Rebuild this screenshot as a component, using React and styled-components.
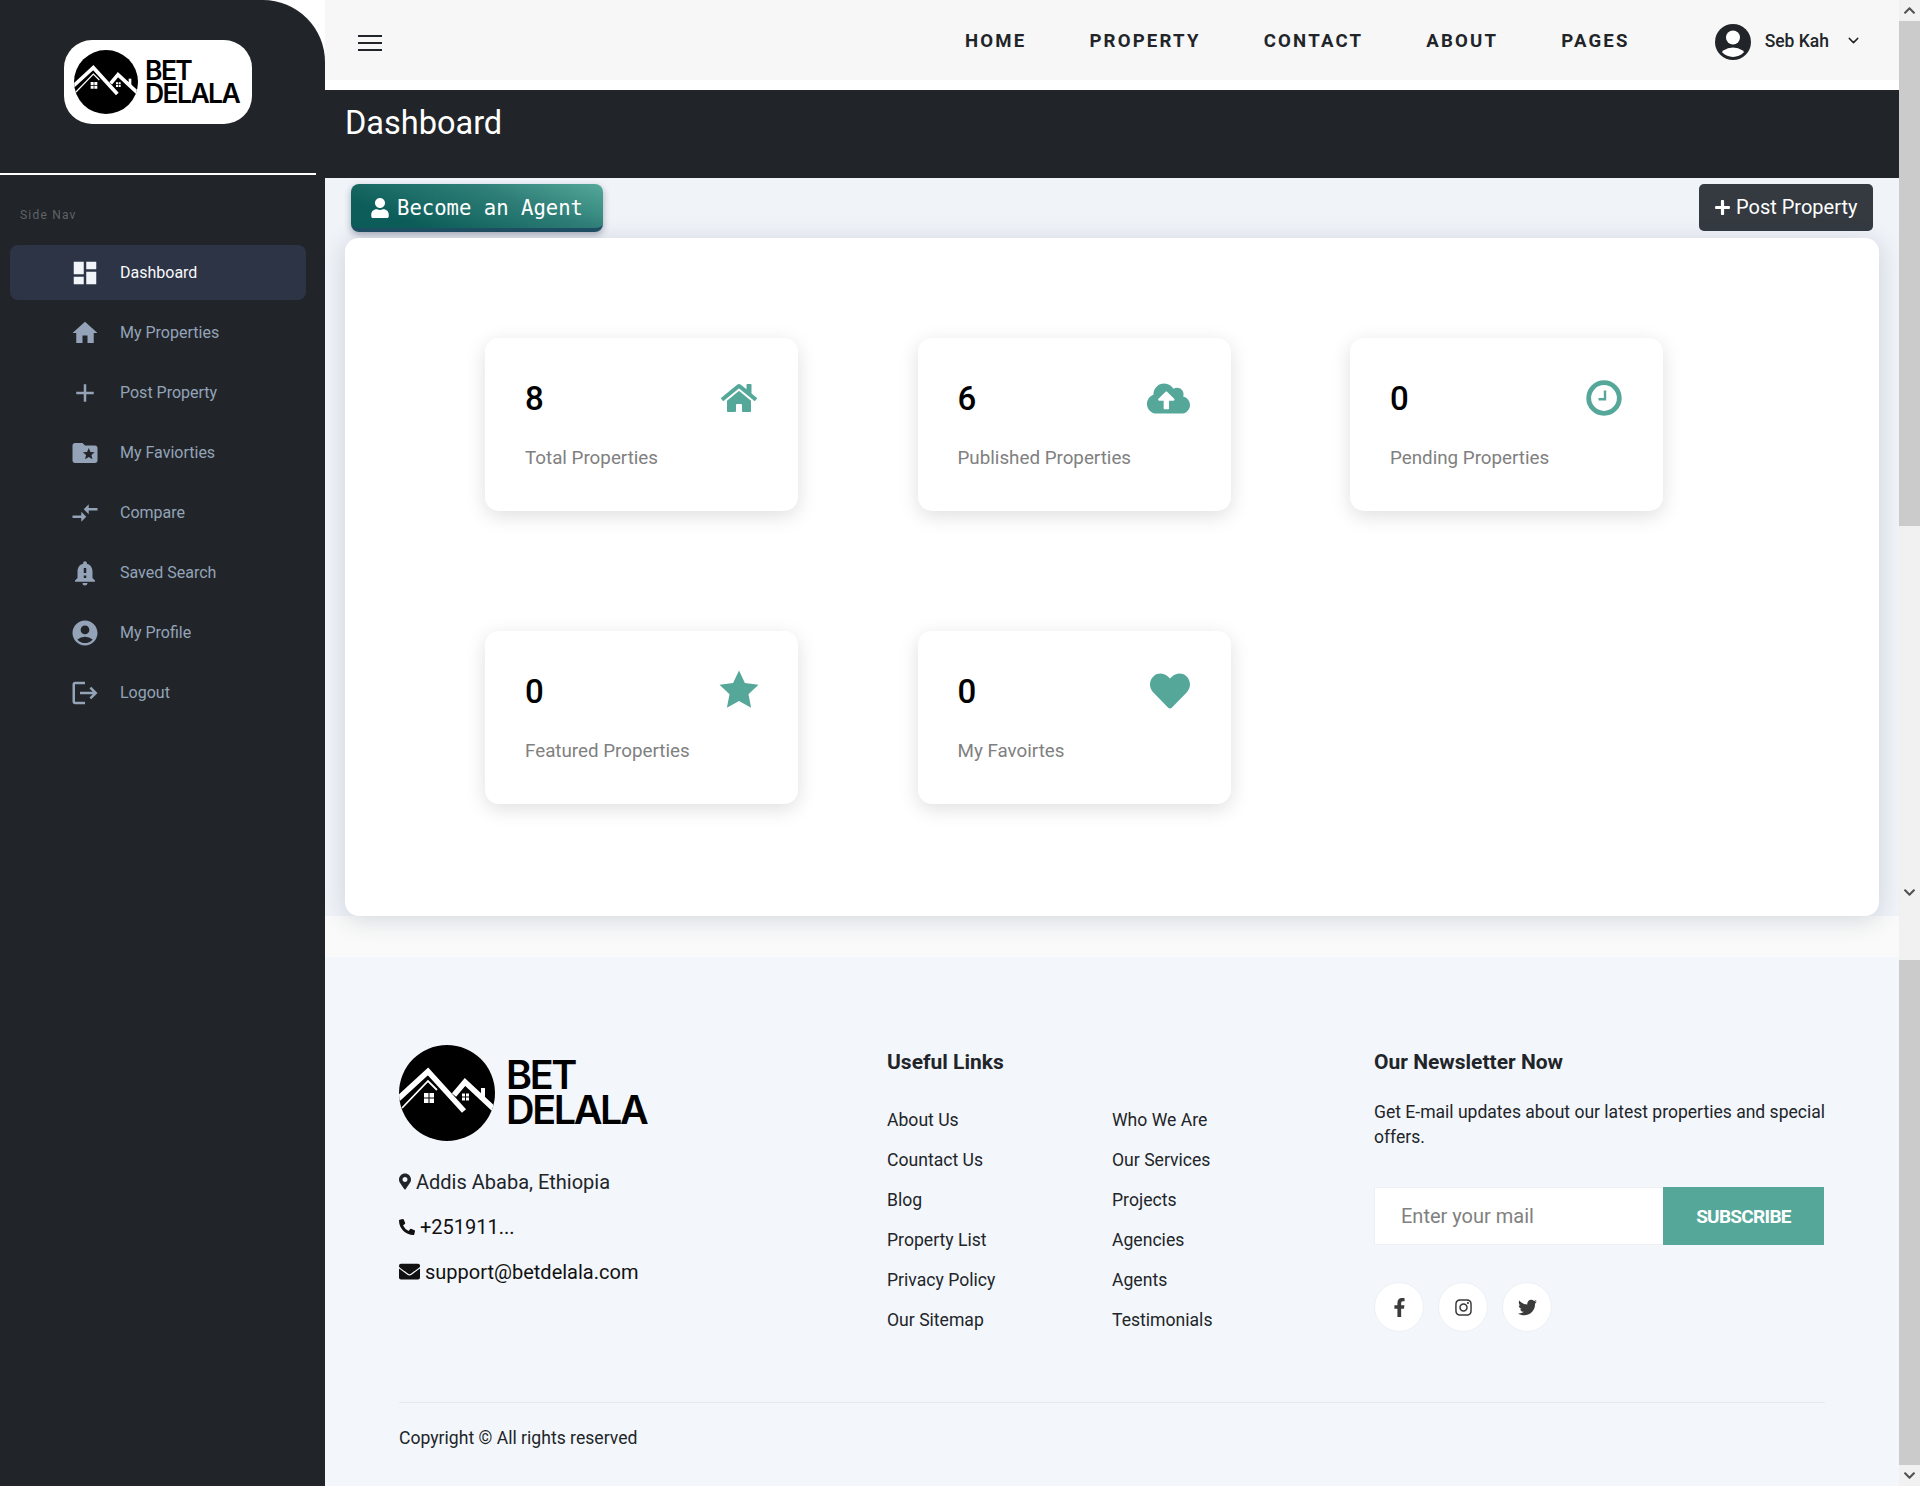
import React from "react";
import styled, { createGlobalStyle } from "styled-components";
import {
  MdDashboard, MdHome, MdAdd, MdFolderSpecial, MdCompareArrows,
  MdNotificationImportant, MdAccountCircle, MdLogout,
} from "react-icons/md";
import {
  FaUser, FaPlus, FaHome, FaCloudUploadAlt, FaHeart, FaMapMarkerAlt, FaPhoneAlt,
  FaEnvelope, FaFacebookF, FaInstagram, FaTwitter, FaChevronUp, FaChevronDown,
} from "react-icons/fa";
import { ChevronDown } from "lucide-react";

const Global = createGlobalStyle`
  html, body { margin: 0; padding: 0; background: #fff; overflow: hidden; }
  body { font-family: Roboto, "Liberation Sans", sans-serif; color: #212529; }
  * { box-sizing: border-box; }
`;

const Page = styled.div`
  display: grid;
  grid-template-columns: 325px 1574px 21px;
  width: 1920px;
  height: 1486px;
  overflow: hidden;
`;

/* ---------- sidebar ---------- */
const Sidebar = styled.aside`
  background: #212529;
  border-top-right-radius: 62px;
  height: 1486px;
`;
const SideHead = styled.div`
  height: 175px;
  width: 316px;
  padding: 40px 0 0 64px;
  border-bottom: 2px solid #fff;
`;
const LogoPill = styled.div`
  display: inline-flex;
  align-items: center;
  width: 188px;
  height: 84px;
  padding-left: 10px;
  background: #fff;
  border-radius: 28px;
`;
const LogoWrap = styled.div`
  display: flex;
  align-items: center;
  gap: ${(p) => p.$gap}px;
`;
const LogoText = styled.div`
  font-family: Inter, "Liberation Sans", sans-serif;
  font-weight: 600;
  color: #000;
  font-size: ${(p) => p.$size}px;
  line-height: ${(p) => p.$line}px;
  letter-spacing: -0.06em;
`;
const SideLabel = styled.div`
  padding: 32px 0 0 20px;
  height: 70px;
  font-size: 12px;
  line-height: 16px;
  letter-spacing: 1.2px;
  color: #5f6368;
`;
const Menu = styled.nav`
  display: flex;
  flex-direction: column;
  gap: 5px;
  padding-left: 10px;
`;
const MenuItem = styled.a`
  display: flex;
  align-items: center;
  width: 296px;
  height: 55px;
  padding-left: 60px;
  gap: 20px;
  border-radius: 8px;
  font-size: 16px;
  color: ${(p) => (p.$active ? "#f8fafc" : "#94a3b8")};
  background: ${(p) => (p.$active ? "#2d3446" : "transparent")};
  svg { width: 30px; height: 30px; flex: none; color: ${(p) => (p.$active ? "#f1f5f9" : "#94a3b8")}; }
`;

/* ---------- main ---------- */
const Main = styled.main`
  display: flex;
  flex-direction: column;
  height: 1486px;
`;
const Topbar = styled.header`
  display: flex;
  align-items: center;
  height: 80px;
  padding: 4px 37px 0 33px;
  background: #f7f7f7;
`;
const Burger = styled.div`
  display: flex;
  flex-direction: column;
  gap: 4.5px;
  width: 24px;
  margin-top: 2px;
  span { display: block; height: 2.5px; background: #212529; }
`;
const TopNav = styled.nav`
  display: flex;
  gap: 63px;
  margin-left: auto;
  margin-top: -2px;
`;
const TopLink = styled.a`
  font-size: 18.6px;
  font-weight: 700;
  letter-spacing: 2.2px;
  color: #212529;
`;
const UserBox = styled.div`
  display: flex;
  align-items: center;
  margin-left: 85px;
  font-size: 17.5px;
  font-weight: 500;
  color: #212529;
  span { margin: -3px 16px 0 14px; }
  svg:last-child { margin-top: -3px; }
`;
const TitleBand = styled.div`
  margin-top: 10px;
  height: 88px;
  padding: 14px 0 0 20px;
  background: #212529;
`;
const Title = styled.h1`
  margin: 0;
  font-size: 32.5px;
  font-weight: 400;
  line-height: 38px;
  color: #fff;
`;
const Content = styled.section`
  height: 738px;
  background: #f0f3f8;
  padding: 6px 20px 0;
`;
const ActionRow = styled.div`
  display: flex;
  justify-content: space-between;
  align-items: flex-start;
  height: 54px;
  padding: 0 6px;
`;
const AgentButton = styled.button`
  display: inline-flex;
  align-items: center;
  gap: 8px;
  width: 252px;
  height: 48px;
  padding: 4px 0 0 20px;
  border: 0;
  border-bottom: 4px solid #1f4f63;
  border-radius: 8px;
  background: linear-gradient(200deg, #55a899 0%, #2f7f78 35%, #0d5e5a 80%);
  box-shadow: 0 3px 7px rgba(30, 40, 70, 0.35);
  color: #fff;
  font-family: "DejaVu Sans Mono", monospace;
  font-size: 20.6px;
  svg { width: 18px; height: 20px; }
`;
const PostButton = styled.button`
  display: inline-flex;
  align-items: center;
  gap: 5px;
  height: 47px;
  width: 174px;
  padding: 0 0 1px 15px;
  border: 0;
  border-radius: 5px;
  background: #343a40;
  color: #fff;
  font-family: Roboto, sans-serif;
  font-size: 20px;
  svg { width: 17px; height: 17px; }
`;
const BoardCard = styled.div`
  position: relative;
  z-index: 1;
  height: 678px;
  padding: 100px 0 0 140px;
  background: #fff;
  border-radius: 14px;
  box-shadow: 0 4px 24px rgba(30, 50, 80, 0.17);
`;
const StatGrid = styled.div`
  display: grid;
  grid-template-columns: repeat(3, 313px);
  column-gap: 119.5px;
  row-gap: 120px;
`;
const StatCard = styled.div`
  height: 173px;
  padding: 41px 41px 0 40px;
  background: #fff;
  border-radius: 14px;
  box-shadow: 0 5px 20px rgba(0, 0, 0, 0.13);
`;
const StatTop = styled.div`
  display: flex;
  justify-content: space-between;
  align-items: center;
  height: 38px;
  color: #55a899;
`;
const StatValue = styled.div`
  font-size: 33px;
  font-weight: 500;
  color: #000;
`;
const StatLabel = styled.div`
  margin-top: 28px;
  font-size: 18.8px;
  line-height: 26px;
  color: #808080;
`;
const Strip = styled.div`
  height: 41px;
  background: #fafafa;
`;

/* ---------- footer ---------- */
const Footer = styled.footer`
  flex: 1;
  padding: 88px 74px 0;
  background: #f3f6fb;
`;
const FooterGrid = styled.div`
  display: grid;
  grid-template-columns: 451px 450px 450px;
  column-gap: 37px;
  height: 357px;
`;
const ContactList = styled.div`
  margin-top: 18px;
`;
const ContactRow = styled.div`
  display: flex;
  align-items: center;
  gap: 5px;
  height: 45px;
  font-size: 20px;
  color: ${(p) => p.$color || "#212529"};
`;
const PinIcon = styled(FaMapMarkerAlt)`
  width: 12px;
  height: 17px;
`;
const ColumnHead = styled.h4`
  margin: 5px 0 0;
  font-size: 21px;
  line-height: 24px;
  font-weight: 700;
  color: #212529;
`;
const LinkGrid = styled.div`
  display: grid;
  grid-template-columns: 225px 1fr;
  grid-auto-rows: 40px;
  margin-top: 26px;
`;
const FootLink = styled.a`
  display: flex;
  align-items: center;
  font-size: 17.6px;
  color: #212529;
`;
const NewsText = styled.p`
  margin: 26px -6px 0 0;
  font-size: 17.55px;
  line-height: 25px;
  color: #212529;
`;
const Subscribe = styled.form`
  display: flex;
  margin-top: 37px;
  width: 450px;
  height: 58px;
`;
const MailInput = styled.input`
  width: 289px;
  height: 58px;
  padding: 0 0 0 26px;
  border: 1px solid #edf0f3;
  border-right: 0;
  background: #fff;
  font-family: Roboto, sans-serif;
  font-size: 20px;
  &::placeholder { color: #808080; opacity: 1; }
`;
const SubscribeButton = styled.button`
  width: 161px;
  border: 0;
  background: #55a899;
  color: #fff;
  font-family: Roboto, sans-serif;
  font-size: 19px;
  font-weight: 700;
  letter-spacing: -0.7px;
`;
const Socials = styled.div`
  display: flex;
  gap: 14px;
  margin-top: 37px;
`;
const SocialCircle = styled.a`
  display: flex;
  align-items: center;
  justify-content: center;
  width: 50px;
  height: 50px;
  border: 1px solid #edf0f3;
  border-radius: 50%;
  background: #fff;
  color: #3b3b3b;
  svg { width: 19px; height: 19px; }
`;
const Rule = styled.hr`
  margin: 0;
  border: 0;
  border-top: 1px solid #e6e9ee;
`;
const Copyright = styled.div`
  padding-top: 23px;
  font-size: 17.6px;
  line-height: 24px;
  color: #212529;
`;

/* ---------- scrollbar ---------- */
const ScrollCol = styled.div`
  display: flex;
  flex-direction: column;
  height: 1486px;
  background: #f1f1f1;
`;
const ScrollArrow = styled.div`
  display: flex;
  align-items: center;
  justify-content: center;
  height: 21px;
  flex: none;
  color: #505050;
  margin-top: ${(p) => p.$top || 0}px;
  svg { width: 13px; height: 13px; }
`;
const ScrollThumb = styled.div`
  flex: none;
  height: 505px;
  margin-top: ${(p) => p.$top || 0}px;
  background: #cbcbcb;
`;
const Lifted = styled.div`
  display: flex;
  margin: 0 -2px ${(p) => p.$by}px 0;
`;

/* ---------- drawings ---------- */
function LogoMark({ size }) {
  return (
    <svg width={size} height={size} viewBox="0 0 96 96" style={{ flex: "none" }}>
      <defs>
        <clipPath id={`lm${size}`}>
          <circle cx="48" cy="48" r="48" />
        </clipPath>
      </defs>
      <circle cx="48" cy="48" r="48" fill="#000" />
      <g clipPath={`url(#lm${size})`} fill="none" stroke="#fff" strokeLinecap="butt">
        <path d="M-1 54 L29 26.5 L65 66" strokeWidth="5.5" />
        <path d="M3 63 L29 36 L38 45" strokeWidth="1.8" />
        <path d="M55 50 L66 37 L97 66" strokeWidth="5.5" />
        <rect x="82" y="43" width="4" height="12" fill="#fff" stroke="none" />
        <path d="M25 48h4.5v4.5H25zM30.5 48H35v4.5h-4.5zM25 53.5h4.5V58H25zM30.5 53.5H35V58h-4.5z" fill="#fff" stroke="none" />
        <path d="M63 48.5h3v3h-3zM67 48.5h3v3h-3zM63 52.5h3v3h-3zM67 52.5h3v3h-3z" fill="#fff" stroke="none" />
      </g>
    </svg>
  );
}

function Logo({ mark, gap, size, line }) {
  return (
    <LogoWrap $gap={gap}>
      <LogoMark size={mark} />
      <LogoText $size={size} $line={line}>
        BET
        <br />
        DELALA
      </LogoText>
    </LogoWrap>
  );
}

const ClockIcon = () => (
  <svg width="37" height="36" viewBox="0 0 37 36" fill="none" stroke="#55a899">
    <circle cx="19" cy="18" r="15.3" strokeWidth="4.8" />
    <path d="M20 10.5 V19.2 H13.5" strokeWidth="2.4" />
  </svg>
);

const StarIcon = () => (
  <Lifted $by={4}>
    <svg width="40" height="38" viewBox="0 0 38 36">
      <polygon
        fill="#55a899"
        points="19,.5 24.6,12.3 37.5,14 28,22.9 30.5,35.8 19,29.5 7.5,35.8 10,22.9 .5,14 13.4,12.3"
      />
    </svg>
  </Lifted>
);

const Avatar = () => (
  <svg width="36" height="36" viewBox="0 0 36 36">
    <defs>
      <clipPath id="avInner">
        <circle cx="18" cy="18" r="15" />
      </clipPath>
    </defs>
    <circle cx="18" cy="18" r="18" fill="#212529" />
    <circle cx="18" cy="13.5" r="7" fill="#fff" />
    <ellipse cx="18" cy="33" rx="13" ry="9.5" fill="#fff" clipPath="url(#avInner)" />
  </svg>
);

const menu = [
  ["Dashboard", MdDashboard, true],
  ["My Properties", MdHome],
  ["Post Property", MdAdd],
  ["My Faviorties", MdFolderSpecial],
  ["Compare", MdCompareArrows],
  ["Saved Search", MdNotificationImportant],
  ["My Profile", MdAccountCircle],
  ["Logout", MdLogout],
];

const stats = [
  ["8", "Total Properties", <FaHome key="h" size={36} />],
  ["6", "Published Properties", <FaCloudUploadAlt key="c" size={43} />],
  ["0", "Pending Properties", <ClockIcon key="k" />],
  ["0", "Featured Properties", <StarIcon key="s" />],
  ["0", "My Favoirtes", <FaHeart key="f" size={40} />],
];

const links = [
  "About Us", "Who We Are",
  "Countact Us", "Our Services",
  "Blog", "Projects",
  "Property List", "Agencies",
  "Privacy Policy", "Agents",
  "Our Sitemap", "Testimonials",
];

export default function App() {
  return (
    <>
      <Global />
      <Page>
        <Sidebar>
          <SideHead>
            <LogoPill>
              <Logo mark={64} gap={7} size={26.5} line={23} />
            </LogoPill>
          </SideHead>
          <SideLabel>Side Nav</SideLabel>
          <Menu>
            {menu.map(([label, Icon, active]) => (
              <MenuItem key={label} $active={active}>
                <Icon />
                {label}
              </MenuItem>
            ))}
          </Menu>
        </Sidebar>

        <Main>
          <Topbar>
            <Burger>
              <span />
              <span />
              <span />
            </Burger>
            <TopNav>
              {["HOME", "PROPERTY", "CONTACT", "ABOUT", "PAGES"].map((t) => (
                <TopLink key={t}>{t}</TopLink>
              ))}
            </TopNav>
            <UserBox>
              <Avatar />
              <span>Seb Kah</span>
              <ChevronDown size={17} strokeWidth={2} />
            </UserBox>
          </Topbar>
          <TitleBand>
            <Title>Dashboard</Title>
          </TitleBand>
          <Content>
            <ActionRow>
              <AgentButton>
                <FaUser />
                Become an Agent
              </AgentButton>
              <PostButton>
                <FaPlus />
                Post Property
              </PostButton>
            </ActionRow>
            <BoardCard>
              <StatGrid>
                {stats.map(([value, label, icon]) => (
                  <StatCard key={label}>
                    <StatTop>
                      <StatValue>{value}</StatValue>
                      {icon}
                    </StatTop>
                    <StatLabel>{label}</StatLabel>
                  </StatCard>
                ))}
              </StatGrid>
            </BoardCard>
          </Content>
          <Strip />
          <Footer>
            <FooterGrid>
              <div>
                <Logo mark={96} gap={11} size={39.5} line={35} />
                <ContactList>
                  <ContactRow>
                    <PinIcon />
                    Addis Ababa, Ethiopia
                  </ContactRow>
                  <ContactRow $color="#111">
                    <FaPhoneAlt size={16} />
                    +251911...
                  </ContactRow>
                  <ContactRow $color="#111">
                    <FaEnvelope size={21} />
                    support@betdelala.com
                  </ContactRow>
                </ContactList>
              </div>
              <div>
                <ColumnHead>Useful Links</ColumnHead>
                <LinkGrid>
                  {links.map((l) => (
                    <FootLink key={l}>{l}</FootLink>
                  ))}
                </LinkGrid>
              </div>
              <div>
                <ColumnHead>Our Newsletter Now</ColumnHead>
                <NewsText>Get E-mail updates about our latest properties and special offers.</NewsText>
                <Subscribe>
                  <MailInput placeholder="Enter your mail" />
                  <SubscribeButton type="button">SUBSCRIBE</SubscribeButton>
                </Subscribe>
                <Socials>
                  <SocialCircle><FaFacebookF /></SocialCircle>
                  <SocialCircle><FaInstagram /></SocialCircle>
                  <SocialCircle><FaTwitter /></SocialCircle>
                </Socials>
              </div>
            </FooterGrid>
            <Rule />
            <Copyright>Copyright © All rights reserved</Copyright>
          </Footer>
        </Main>

        <ScrollCol>
          <ScrollArrow><FaChevronUp /></ScrollArrow>
          <ScrollThumb />
          <ScrollArrow $top={356}><FaChevronDown /></ScrollArrow>
          <ScrollThumb $top={57} />
          <ScrollArrow><FaChevronDown /></ScrollArrow>
        </ScrollCol>
      </Page>
    </>
  );
}
